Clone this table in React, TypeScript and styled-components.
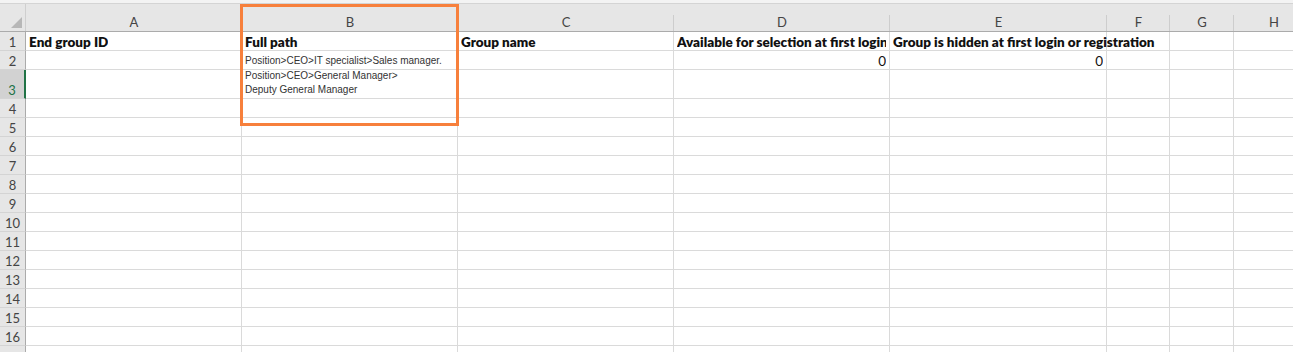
import styled, { createGlobalStyle } from 'styled-components';

const GlobalStyle = createGlobalStyle`
  html, body {
    margin: 0;
    padding: 0;
    background: #fff;
    overflow: hidden;
  }
`;

const COLS = [
  { key: 'A', width: 216 },
  { key: 'B', width: 216 },
  { key: 'C', width: 216 },
  { key: 'D', width: 216 },
  { key: 'E', width: 217 },
  { key: 'F', width: 63 },
  { key: 'G', width: 64 },
  { key: 'H', width: 80 },
];

type CellData = { text?: string; bold?: boolean; align?: 'left' | 'right'; small?: boolean; spill?: boolean };

const ROWS: { height: number; label?: string; cells: Record<string, CellData> }[] = [
  {
    height: 19,
    label: '1',
    cells: {
      A: { text: 'End group ID', bold: true },
      B: { text: 'Full path', bold: true },
      C: { text: 'Group name', bold: true },
      D: { text: 'Available for selection at first login or registration', bold: true },
      E: { text: 'Group is hidden at first login or registration', bold: true, spill: true },
    },
  },
  {
    height: 19,
    label: '2',
    cells: {
      B: { text: 'Position>CEO>IT specialist>Sales manager.', small: true },
      D: { text: '0', align: 'right' },
      E: { text: '0', align: 'right' },
    },
  },
  {
    height: 29,
    label: '3',
    cells: {
      B: { text: 'Position>CEO>General Manager>\nDeputy General Manager', small: true },
    },
  },
  ...Array.from({ length: 13 }, (_, i) => ({ height: 19, label: String(i + 4), cells: {} })),
  { height: 19, cells: {} },
];

const Page = styled.div`
  position: relative;
  width: 1293px;
  height: 352px;
  overflow: hidden;
  background: #fff;
`;

const TopStrip = styled.div`
  height: 3px;
  background: #f3f3f3;
  border-bottom: 1px solid #d4d4d4;
`;

const Row = styled.div<{ $h: number }>`
  display: flex;
  height: ${(p) => p.$h}px;
`;

const HeaderRow = styled.div`
  display: flex;
  height: 27px;
  background: #e6e6e6;
  border-bottom: 1px solid #ababab;
`;

const Corner = styled.div`
  position: relative;
  width: 26px;
  flex: none;
  border-right: 1px solid #cfcfcf;
  box-sizing: border-box;

  &::after {
    content: '';
    position: absolute;
    right: 3px;
    bottom: 3px;
    border-left: 11px solid transparent;
    border-bottom: 11px solid #b7b7b7;
  }
`;

const ColHead = styled.div<{ $w: number }>`
  width: ${(p) => p.$w}px;
  flex: none;
  position: relative;
  display: flex;
  align-items: flex-end;
  justify-content: center;
  padding-bottom: 1px;
  box-sizing: border-box;
  font-family: Lato, 'Liberation Sans', sans-serif;
  font-size: 13px;
  color: #444;

  &::after {
    content: '';
    position: absolute;
    right: 0;
    top: 11px;
    bottom: 0;
    width: 1px;
    background: #cdcdcd;
  }
`;

const RowHead = styled.div<{ $active?: boolean }>`
  width: 26px;
  flex: none;
  box-sizing: border-box;
  display: flex;
  align-items: flex-end;
  justify-content: center;
  background: ${(p) => (p.$active ? '#d2d2d2' : '#e6e6e6')};
  border-bottom: 1px solid #d4d4d4;
  border-right: ${(p) => (p.$active ? '2px solid #217346' : '1px solid #ababab')};
  font-family: Lato, 'Liberation Sans', sans-serif;
  font-size: 13px;
  line-height: 16px;
  color: ${(p) => (p.$active ? '#217346' : '#444')};
`;

const Cell = styled.div<{ $w: number; $align: string; $spill?: boolean; $small?: boolean; $bold?: boolean }>`
  width: ${(p) => p.$w}px;
  flex: none;
  box-sizing: border-box;
  border-right: 1px solid #dadada;
  border-bottom: 1px solid #dadada;
  padding: 0 3px ${(p) => (p.$small ? '1px' : '0')} 3px;
  display: flex;
  align-items: flex-end;
  justify-content: ${(p) => (p.$align === 'right' ? 'flex-end' : 'flex-start')};
  white-space: pre;
  overflow: ${(p) => (p.$spill ? 'visible' : 'hidden')};
  position: relative;
  z-index: ${(p) => (p.$spill ? 1 : 0)};
  font-family: ${(p) => (p.$small ? "'Liberation Sans', Arial, sans-serif" : "Lato, 'Liberation Sans', sans-serif")};
  font-size: ${(p) => (p.$small ? '10px' : '13.5px')};
  line-height: ${(p) => (p.$small ? '14px' : '16px')};
  font-weight: ${(p) => (p.$bold ? 800 : 400)};
  color: ${(p) => (p.$small ? '#333' : '#111')};
`;

const CellText = styled.span<{ $spill?: boolean }>`
  display: block;
  min-width: 0;
  max-width: ${(p) => (p.$spill ? 'none' : '100%')};
  overflow: ${(p) => (p.$spill ? 'visible' : 'hidden')};
`;

const Highlight = styled.div`
  position: absolute;
  left: 240px;
  top: 4px;
  width: 219px;
  height: 122px;
  border: 3px solid #f7803c;
  box-sizing: border-box;
  pointer-events: none;
  z-index: 5;
`;

export default function App() {
  return (
    <Page>
      <GlobalStyle />
      <TopStrip />
      <HeaderRow>
        <Corner />
        {COLS.map((c) => (
          <ColHead key={c.key} $w={c.width}>
            {c.key}
          </ColHead>
        ))}
      </HeaderRow>
      {ROWS.map((row, i) => (
        <Row key={i} $h={row.height}>
          <RowHead $active={i === 2}>{row.label}</RowHead>
          {COLS.map((c) => {
            const d = row.cells[c.key] ?? {};
            return (
              <Cell
                key={c.key}
                $w={c.width}
                $align={d.align ?? 'left'}
                $spill={d.spill}
                $small={d.small}
                $bold={d.bold}
              >
                {d.text && <CellText $spill={d.spill}>{d.text}</CellText>}
              </Cell>
            );
          })}
        </Row>
      ))}
      <Highlight />
    </Page>
  );
}
